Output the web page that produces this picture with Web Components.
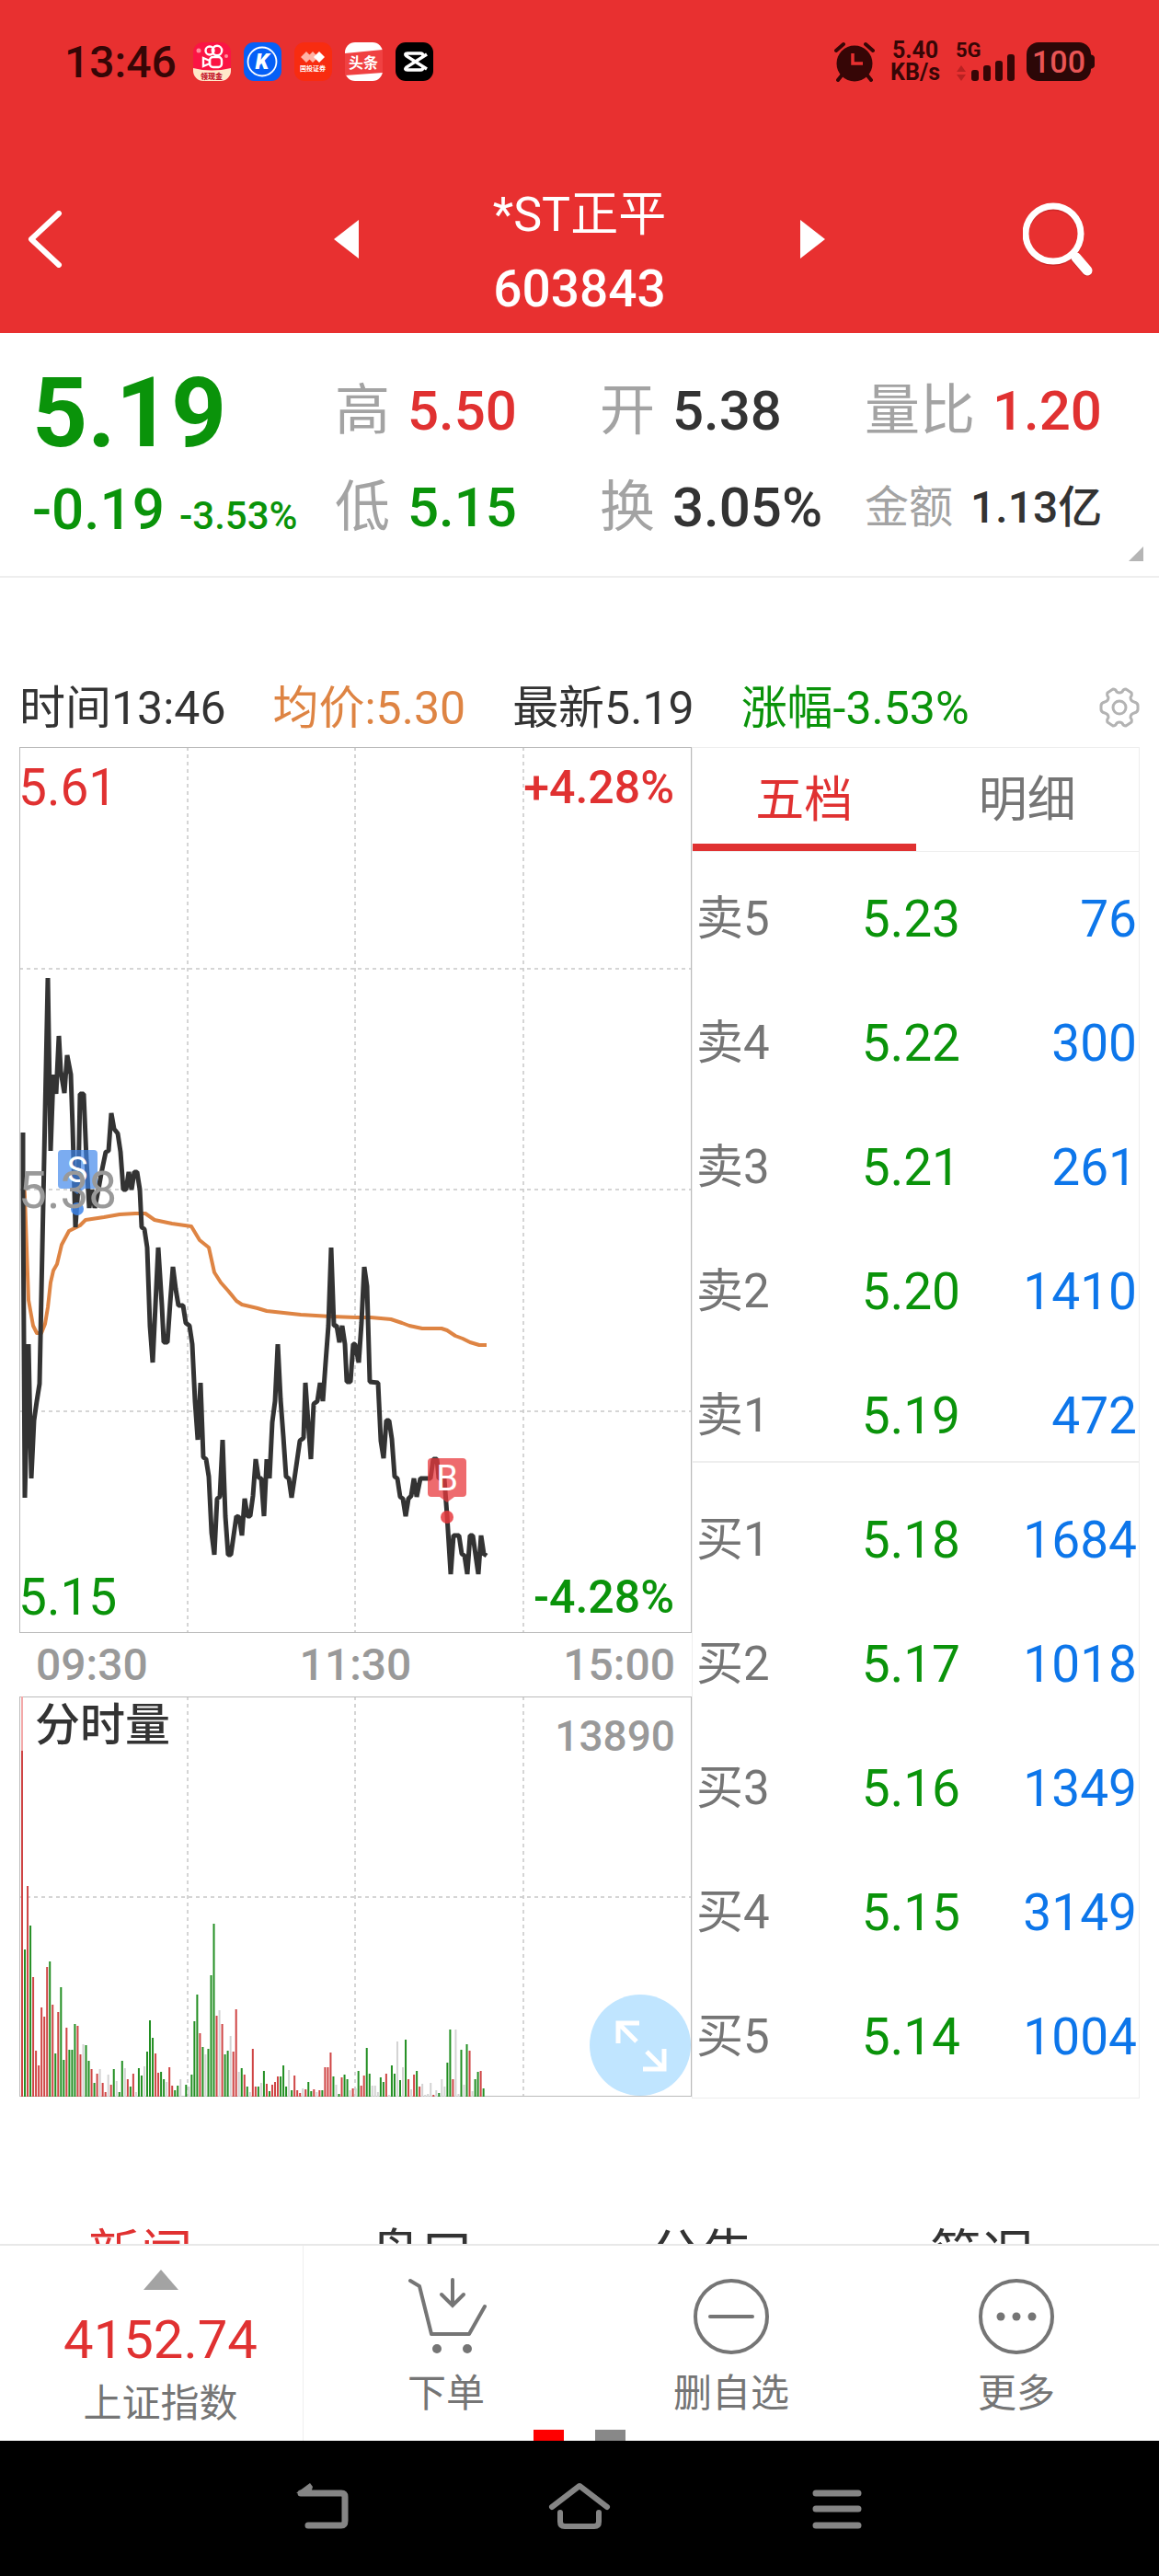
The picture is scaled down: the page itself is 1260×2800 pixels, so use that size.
<!DOCTYPE html>
<html lang="zh-CN">
<head>
<meta charset="utf-8">
<meta name="viewport" content="width=device-width, initial-scale=1">
<title>*ST正平 603843</title>
<style>
    :root {
        --red: #e03131;
        --green: #0a930a;
        --orange: #de8443;
        --blue: #0d76ea;
        --ink: #333;
        --grey: #757575;
        --muted: #a3a3a3;
        --line: #eee;
    }
    body {
        margin: 0;
        background: #fff;
        color: var(--ink);
        font-family: Roboto, "Noto Sans CJK SC", sans-serif;
    }
</style>
</head>
<body>
<status-bar></status-bar>
<stock-header code="603843">*ST正平</stock-header>
<quote-summary price="5.19" change="-0.19" percent="-3.53%">
    <quote-stat label="高" tone="up">5.50</quote-stat>
    <quote-stat label="开">5.38</quote-stat>
    <quote-stat label="量比" tone="up">1.20</quote-stat>
    <quote-stat label="低" tone="down">5.15</quote-stat>
    <quote-stat label="换">3.05%</quote-stat>
    <quote-stat label="金额" compact>1.13亿</quote-stat>
</quote-summary>
<stock-board>
    <info-strip slot="info"></info-strip>
    <price-chart slot="chart"></price-chart>
    <volume-chart slot="chart"></volume-chart>
    <order-book slot="book"></order-book>
</stock-board>
<section-tabs></section-tabs>
<dock-bar>
    <index-ticker slot="ticker" value="4152.74">上证指数</index-ticker>
    <dock-item icon="cart">下单</dock-item>
    <dock-item icon="minus">删自选</dock-item>
    <dock-item icon="more">更多</dock-item>
</dock-bar>
<system-nav></system-nav>

<script>
class BaseElement extends HTMLElement {
    constructor() {
        super();
        this.attachShadow({ mode: 'open' });
    }

    connectedCallback() {
        this.shadowRoot.innerHTML = `
            <style>
                :host { display: block; box-sizing: border-box; }
                * { box-sizing: border-box; }
                button { margin: 0; padding: 0; border: 0; background: none; font: inherit; color: inherit; cursor: pointer; }
                svg { display: block; }
            </style>
            ${this.template()}`;
    }
}

class StatusBar extends BaseElement {
    template() {
        return `
            <style>
                :host { background: #e83030; color: #360606; font-weight: 500; }
                .bar { display: flex; align-items: center; justify-content: space-between; height: 134px; padding: 0 70px; }
                .side { display: flex; align-items: center; }
                .time { font-size: 48px; margin-right: 18px; }
                .apps { display: flex; gap: 14px; }
                .right { gap: 17px; }
                .speed { display: flex; flex-direction: column; align-items: center; font-size: 25px; line-height: 24px; font-weight: 700; }
                .signal { overflow: visible; }
                .signal text { font-size: 22px; font-weight: 700; }
                .battery { margin-left: -4px; }
            </style>
            <div class="bar">
                <div class="side">
                    <span class="time">13:46</span>
                    <div class="apps">
                        <svg width="41" height="42" viewBox="0 0 41 42">
                            <defs><clipPath id="c"><rect width="41" height="42" rx="11"/></clipPath></defs>
                            <g clip-path="url(#c)">
                                <rect width="41" height="42" fill="#fb1444"/>
                                <path d="M0 28q20 5 41 0v14H0z" fill="#ffe9c9"/>
                                <g fill="none" stroke="#fff" stroke-width="2.4">
                                    <circle cx="18" cy="9" r="4.5"/><circle cx="26" cy="9" r="5.2"/>
                                    <rect x="18" y="16" width="13" height="11" rx="3.5"/>
                                    <path d="M18 20l-7-3v9l7-3z"/>
                                </g>
                                <g fill="#ff8c9c"><circle cx="6" cy="9" r="2.5"/><circle cx="36" cy="15" r="2"/></g>
                            </g>
                            <text x="20" y="40" text-anchor="middle" font-size="8" font-weight="900" fill="#c4152c">领现金</text>
                        </svg>
                        <svg width="41" height="42" viewBox="0 0 41 42">
                            <rect width="41" height="42" rx="11" fill="#0660f7"/>
                            <circle cx="20" cy="21" r="15.5" fill="none" stroke="#fff" stroke-width="1.8"/>
                            <text x="20" y="29" text-anchor="middle" font-size="24" font-weight="900" font-style="italic" fill="#fff">K</text>
                        </svg>
                        <svg width="41" height="42" viewBox="0 0 41 42">
                            <rect width="41" height="42" rx="11" fill="#f82c10"/>
                            <path d="M7 16l6-6 6 6-6 6zM14 16l6-6 6 6-6 6z" fill="#ffb3a5"/>
                            <path d="M21 16l6-6 6 6-6 6z" fill="#fff"/>
                            <text x="20" y="31" text-anchor="middle" font-size="7" font-weight="700" fill="#fff">国投证券</text>
                        </svg>
                        <svg width="41" height="42" viewBox="0 0 41 42">
                            <rect width="41" height="42" rx="11" fill="#fff"/>
                            <path d="M0 12l41-4v25l-41 3z" fill="#f04142"/>
                            <text x="20" y="28" text-anchor="middle" font-size="16" font-weight="700" fill="#fff">头条</text>
                        </svg>
                        <svg width="41" height="42" viewBox="0 0 41 42">
                            <rect width="41" height="42" rx="11" fill="#000"/>
                            <path d="M34 13L12 27q-3 3 1 3h14q3 0 3-3M34 29L12 15q-3-3 1-3h14q3 0 3 3" fill="none" stroke="#fff" stroke-width="3.5"/>
                        </svg>
                    </div>
                </div>
                <div class="side right">
                    <svg width="44" height="44" viewBox="0 0 44 44" stroke="#360606" stroke-linecap="round">
                        <circle cx="22" cy="24" r="19.5" fill="#360606" stroke="none"/>
                        <path d="M2 10l8-7M42 10l-8-7M8 37l-4 5M36 37l4 5" stroke-width="4"/>
                        <path d="M20 13v11h11" fill="none" stroke="#e83030" stroke-width="3.5" stroke-linecap="butt"/>
                    </svg>
                    <div class="speed"><span>5.40</span><span>KB/s</span></div>
                    <svg class="signal" width="64" height="44" viewBox="0 0 64 44" fill="#360606">
                        <text x="0" y="17">5G</text>
                        <path d="M1 33l5-7 5 7zM1 36l5 7 5-7z" fill="#b92222"/>
                        <rect x="17" y="31" width="8" height="12" rx="3"/>
                        <rect x="30" y="26" width="8" height="17" rx="3"/>
                        <rect x="43" y="21" width="8" height="22" rx="3"/>
                        <rect x="56" y="14" width="8" height="29" rx="3"/>
                    </svg>
                    <svg class="battery" width="74" height="42" viewBox="0 0 74 42">
                        <rect width="70" height="42" rx="13" fill="#2c0707"/>
                        <path d="M69 13q5 1 5 4v8q0 3-5 4z" fill="#2c0707"/>
                        <text x="35" y="33" text-anchor="middle" font-size="34" font-weight="500" fill="#e85555">100</text>
                    </svg>
                </div>
            </div>`;
    }
}

class StockHeader extends BaseElement {
    template() {
        return `
            <style>
                :host { background: #e83030; color: #fff; }
                header { display: grid; grid-template-columns: 1fr auto 1fr; column-gap: 146px; align-items: center; padding: 60px 0 8px; }
                .side { display: flex; align-items: center; justify-content: space-between; margin-bottom: 28px; }
                .left { padding-left: 30px; }
                .right { padding-right: 72px; }
                h1 { margin: 0; font-size: 52px; font-weight: 400; text-align: center; line-height: 80px; }
                h1 span { display: block; font-size: 55px; font-weight: 500; }
            </style>
            <header>
                <div class="side left">
                    <button aria-label="返回">
                        <svg width="38" height="62" viewBox="0 0 38 62"><path d="M34 3L4 31l30 28" fill="none" stroke="#fff" stroke-width="6" stroke-linecap="round" stroke-linejoin="round"/></svg>
                    </button>
                    <button aria-label="上一只">
                        <svg width="27" height="42" viewBox="0 0 27 42"><path d="M27 0v42L0 21z" fill="#fff"/></svg>
                    </button>
                </div>
                <h1><slot></slot><span>${this.getAttribute('code')}</span></h1>
                <div class="side right">
                    <button aria-label="下一只">
                        <svg width="27" height="42" viewBox="0 0 27 42"><path d="M0 0v42l27-21z" fill="#fff"/></svg>
                    </button>
                    <button aria-label="搜索">
                        <svg width="76" height="80" viewBox="0 0 76 80" fill="none" stroke-linecap="round">
                            <g stroke="#b32020" opacity="0.5"><circle cx="33" cy="36" r="30" stroke-width="6"/><path d="M57 61l13 15" stroke-width="10"/></g>
                            <g stroke="#fff"><circle cx="33" cy="34" r="30" stroke-width="7"/><path d="M54 57l5 6" stroke-width="7"/><path d="M58 60l12 14" stroke-width="11"/></g>
                        </svg>
                    </button>
                </div>
            </header>`;
    }
}

class QuoteStat extends BaseElement {
    template() {
        return `
            <style>
                :host { display: flex; align-items: center; gap: 19px; height: 105px; font-size: 60px; font-weight: 500; line-height: 105px; white-space: nowrap; }
                :host([tone="up"]) { color: var(--red); }
                :host([tone="down"]) { color: var(--green); }
                :host([compact]) { font-size: 48px; }
                .label { font-weight: 400; color: var(--muted); }
            </style>
            <span class="label">${this.getAttribute('label')}</span><span><slot></slot></span>`;
    }
}

class QuoteSummary extends BaseElement {
    template() {
        return `
            <style>
                :host { position: relative; display: grid; grid-template-columns: 364fr 864fr; padding: 32px 32px 22px 0; border-bottom: 2px solid var(--line); }
                .now { padding-left: 35px; color: var(--green); white-space: nowrap; }
                .price { font-size: 105px; font-weight: 700; line-height: 112px; }
                .change { display: flex; align-items: baseline; gap: 16px; font-size: 62px; font-weight: 500; line-height: 96px; }
                .percent { font-size: 42px; line-height: 60px; }
                .stats { display: grid; grid-template-columns: repeat(3, 1fr); }
                .corner { position: absolute; right: 17px; bottom: 16px; }
            </style>
            <div class="now">
                <div class="price">${this.getAttribute('price')}</div>
                <div class="change"><span>${this.getAttribute('change')}</span><span class="percent">${this.getAttribute('percent')}</span></div>
            </div>
            <div class="stats"><slot></slot></div>
            <svg class="corner" width="16" height="16" viewBox="0 0 16 16"><path d="M16 0v16H0z" fill="#b5b5b5"/></svg>`;
    }
}

class StockBoard extends BaseElement {
    template() {
        return `
            <style>
                :host { padding: 112px 21px 0; }
                .grid { display: grid; grid-template-columns: 731fr 487fr; }
            </style>
            <slot name="info"></slot>
            <div class="grid">
                <div><slot name="chart"></slot></div>
                <slot name="book"></slot>
            </div>`;
    }
}

class InfoStrip extends BaseElement {
    template() {
        return `
            <style>
                :host { display: flex; align-items: center; gap: 51px; height: 72px; padding-bottom: 14px; font-size: 50px; white-space: nowrap; }
                span { padding-bottom: 8px; }
                .avg { color: var(--orange); }
                .down { color: var(--green); }
                button { margin-left: auto; }
            </style>
            <span>时间13:46</span>
            <span class="avg">均价:5.30</span>
            <span>最新5.19</span>
            <span class="down">涨幅-3.53%</span>
            <button aria-label="设置">
                <svg width="44" height="44" viewBox="0 0 44 44" fill="none" stroke="#b3b3b3" stroke-width="3" stroke-linejoin="round">
                    <path d="M15 2q3 0 4 3 3 2 6 0 1-3 4-3l6 4q1 3-1 5 0 4 4 5 4 1 4 4v4q0 3-4 4-4 1-4 5 2 2 1 5l-6 4q-3 0-4-3-3-2-6 0-1 3-4 3l-6-4q-1-3 1-5 0-4-4-5-4-1-4-4v-4q0-3 4-4 4-1 4-5-2-2-1-5z"/>
                    <circle cx="22" cy="22" r="7"/>
                </svg>
            </button>`;
    }
}

const PRICE_LINE = [
    '25,1230 25,1292 27,1627 31,1460 34,1606 37,1543 40,1522 43,1503 52,1062 55,1250 58,1167 61,1188 64,1125 66,1163 70,1187',
    '73,1146 77,1167 79,1225 82,1333 85,1290 87,1188 91,1188 94,1260 97,1312 100,1292 103,1312 107,1292 110,1275 115,1251',
    '118,1250 121,1209 124,1226 128,1231 131,1251 134,1292 137,1292 140,1273 143,1292 146,1273 149,1273 152,1292 154,1333',
    '157,1335 160,1355 163,1440 166,1480 172,1355 176,1418 178,1458 182,1458 185,1415 188,1376 191,1400 194,1418 199,1418',
    '202,1437 206,1440 209,1460 212,1522 215,1564 218,1502 221,1583 224,1585 227,1604 230,1665 233,1689 236,1628 239,1626',
    '242,1564 245,1647 248,1689 251,1689 254,1668 257,1647 260,1648 263,1668 266,1628 269,1647 272,1647 275,1625 278,1585',
    '281,1605 284,1606 287,1647 290,1585 293,1606 296,1545 299,1522 302,1460 305,1520 308,1560 311,1604 314,1606 317,1627',
    '321,1600 326,1565 330,1562 332,1502 335,1545 338,1585 341,1525 345,1522 348,1502 351,1522 354,1480 357,1440 360,1355',
    '363,1440 366,1440 369,1458 372,1440 375,1460 377,1501 381,1501 384,1460 386,1460 390,1480 393,1437 396,1376 399,1397',
    '402,1501 411,1502 414,1565 417,1584 420,1543 423,1543 426,1563 429,1604 432,1606 435,1626 438,1628 441,1647 444,1628',
    '447,1625 450,1606 453,1626 457,1606 468,1606 471,1585 475,1585 477,1606 483,1606 486,1646 490,1710 493,1668 499,1668',
    '502,1688 505,1690 508,1710 511,1668 514,1668 520,1710 523,1668 526,1688 529,1690'
].join(' ');

const AVERAGE_LINE = [
    '26,1280 27,1300 31,1412 36,1440 40,1448 45,1448 49,1438 52,1420 55,1393 58,1380 62,1373 67,1352 75,1337 87,1331 93,1325',
    '113,1322 130,1319 147,1318 158,1318 168,1325 187,1329 208,1332 217,1347 227,1355 233,1382 240,1393 248,1402 257,1413',
    '263,1417 280,1421 290,1424 327,1428 360,1430 387,1431 403,1431 425,1433 437,1437 445,1440 459,1443 480,1443 486,1445',
    '495,1451 503,1454 511,1458 521,1461 529,1461'
].join(' ');

class PriceChart extends BaseElement {
    template() {
        return `
            <style>
                svg { width: 100%; height: auto; }
                .plot { position: relative; }
                .label { position: absolute; line-height: 60px; font-size: 55px; }
                .percent { font-size: 50px; font-weight: 500; }
                .top { top: 14px; }
                .middle { top: 0; bottom: 0; margin: auto 0; height: 60px; color: #999; }
                .bottom { bottom: 9px; }
                .left { left: -1px; }
                .right { right: 19px; }
                .up { color: var(--red); }
                .down { color: var(--green); }
                .axis { display: flex; justify-content: space-between; padding: 0 18px; font-size: 48px; font-weight: 500; line-height: 69px; color: #999; }
            </style>
            <div class="plot">
                <svg viewBox="21 811 731 963" fill="none">
                    <g stroke="#c8c8c8" stroke-width="1.5" stroke-dasharray="4 4">
                        <path d="M204 811v963M386 811v963M569 811v963M21 1052h731M21 1292h731M21 1533h731"/>
                    </g>
                    <rect x="21.5" y="811.5" width="730" height="962" stroke="#bbb"/>
                    <polyline points="${AVERAGE_LINE}" stroke="#de8443" stroke-width="4" stroke-linejoin="round"/>
                    <polyline points="${PRICE_LINE}" stroke="#333" stroke-width="5" stroke-linejoin="bevel"/>
                    <g fill="#3d85ea">
                        <path d="M67 1249h35q4 0 4 4v34q0 4-4 4H92l-8 6-8-6h-9q-4 0-4-4v-34q0-4 4-4z" opacity="0.68"/>
                        <circle cx="84" cy="1313" r="7" opacity="0.85"/>
                        <text x="84" y="1284" text-anchor="middle" font-size="38" fill="#fff">S</text>
                    </g>
                    <g fill="#e83a3e">
                        <path d="M469 1584h34q4 0 4 4v34q0 4-4 4h-9l-8 6-8-6h-9q-4 0-4-4v-34q0-4 4-4z" opacity="0.75"/>
                        <circle cx="486" cy="1648" r="7" opacity="0.85"/>
                        <text x="486" y="1619" text-anchor="middle" font-size="38" fill="#fff">B</text>
                    </g>
                </svg>
                <span class="label top left up">5.61</span>
                <span class="label percent top right up">+4.28%</span>
                <span class="label middle left">5.38</span>
                <span class="label bottom left down">5.15</span>
                <span class="label percent bottom right down">-4.28%</span>
            </div>
            <div class="axis"><span>09:30</span><span>11:30</span><span>15:00</span></div>`;
    }
}

// one entry per minute: r = up, g = down, w = flat, followed by the bar height
const VOLUMES = `r376 g160 r229 g186 r130 r50 r34 r97 r87 r141 g147 r100 g47 r92 g119 g40 r75 g51 g51 g79
r77 r46 w57 g56 g39 r30 g15 r25 w30 r15 r5 w24 r13 g30 w17 g5 g39 w31 r19 g11
r25 w5 g31 g23 w33 g49 g83 g64 r47 r26 g27 g19 w16 r32 r12 g7 g12 w19 w0 g13
w11 g24 g82 g111 r69 g54 w46 g52 g132 g188 r88 w94 r79 g46 g50 w66 r49 r95 w27 g31
r24 g11 w5 r52 r11 g11 w15 g28 r14 g6 r13 r16 r22 g22 g34 g11 w29 g7 r23 r7
r4 w9 r8 g16 g6 r8 w5 r7 g7 r32 r32 r48 g22 w13 g3 r21 g24 g19 w7 r9
w9 g28 r12 r23 g53 g25 w12 w12 w5 g21 g16 r25 w2 g34 g25 w60 g18 w32 g62 r19
w8 r24 g28 r11 w14 w2 w3 w15 r2 w7 g4 w19 w11 g37 g73 r19 w73 w3 g51 w13
g57 r50 w6 g19 g27 r28 g9`.split(/\s+/);

const BAR_COLORS = { r: '#cf4545', g: '#238f23', w: '#d3d3d3' };
const BAR_STEP = 3.022;

class VolumeChart extends BaseElement {
    template() {
        const bars = VOLUMES.map((bar, i) => {
            const height = Number(bar.slice(1));
            const x = (2 + i * BAR_STEP).toFixed(2);
            return `<rect x="${x}" y="${435 - height}" width="2" height="${height}" fill="${BAR_COLORS[bar[0]]}"/>`;
        }).join('');
        return `
            <style>
                :host { position: relative; }
                svg { width: 100%; height: auto; }
                .name, .max { position: absolute; line-height: 60px; font-weight: 500; }
                .name { top: 2px; left: 17px; font-size: 49px; }
                .max { top: 13px; right: 18px; font-size: 46px; color: #999; }
                button { position: absolute; right: 1px; bottom: 1px; width: 110px; height: 110px; border-radius: 50%; background: #c0e5ff; }
            </style>
            <svg viewBox="0 0 731 435" fill="none">
                <path d="M183 0v435M365 0v435M548 0v435M0 218h731" stroke="#c8c8c8" stroke-width="1.5" stroke-dasharray="4 4"/>
                <rect x="0.5" y="0.5" width="730" height="434" stroke="#bbb"/>
                <rect x="2" y="0" width="2" height="435" fill="#f3a9a9"/>
                ${bars}
            </svg>
            <span class="name">分时量</span>
            <span class="max">13890</span>
            <button aria-label="全屏">
                <svg viewBox="0 0 110 110" fill="none" stroke="#fff" stroke-width="5">
                    <path d="M31 53V31h23M31 31l20 20M81 59v22H58M81 81L62 62"/>
                </svg>
            </button>`;
    }
}

const ORDERS = [
    ['卖5', '5.23', 76], ['卖4', '5.22', 300], ['卖3', '5.21', 261], ['卖2', '5.20', 1410], ['卖1', '5.19', 472],
    ['买1', '5.18', 1684], ['买2', '5.17', 1018], ['买3', '5.16', 1349], ['买4', '5.15', 3149], ['买5', '5.14', 1004]
];

class OrderBook extends BaseElement {
    template() {
        const rows = ORDERS.map(([name, price, volume]) => `
            <tr class="${name === '卖1' ? 'split' : ''}">
                <th scope="row">${name}</th><td class="price">${price}</td><td class="volume">${volume}</td>
            </tr>`).join('');
        return `
            <style>
                :host { border: 1px solid var(--line); }
                .tabs { display: grid; grid-template-columns: 1fr 1fr; border-bottom: 1px solid var(--line); margin-bottom: 4px; }
                .tabs button { height: 112px; font-size: 53px; color: var(--grey); border-bottom: 8px solid transparent; }
                .tabs button.active { color: var(--red); border-color: var(--red); }
                table { width: 100%; border-collapse: collapse; table-layout: fixed; }
                th, td { padding: 2px 0 0; height: 135px; line-height: 70px; font-size: 55px; font-weight: 400; text-align: right; }
                th { width: 24%; padding-left: 4px; font-size: 51px; text-align: left; color: var(--grey); }
                .price { width: 36%; color: var(--green); }
                .volume { padding-right: 2px; color: var(--blue); }
                .split > * { background: linear-gradient(var(--line), var(--line)) 0 118px / 100% 2px no-repeat; }
            </style>
            <div class="tabs" role="tablist">
                <button class="active" role="tab" aria-selected="true">五档</button>
                <button role="tab" aria-selected="false">明细</button>
            </div>
            <table><tbody>${rows}</tbody></table>`;
    }
}

class SectionTabs extends BaseElement {
    template() {
        return `
            <style>
                :host { margin-top: 118px; }
                nav { display: grid; grid-template-columns: repeat(4, 1fr); height: 40px; overflow: hidden; padding-right: 40px; }
                button { height: 104px; line-height: 104px; font-size: 57px; }
                .active { color: var(--red); }
            </style>
            <nav>
                <button class="active">新闻</button>
                <button>盘口</button>
                <button>公告</button>
                <button>简况</button>
            </nav>`;
    }
}

class IndexTicker extends BaseElement {
    template() {
        return `
            <style>
                :host { display: flex; flex-direction: column; align-items: center; padding: 26px 0 0 20px; border-right: 1px solid var(--line); }
                .value { margin-top: 18px; font-size: 58px; line-height: 72px; color: var(--red); }
                .name { margin-top: 4px; font-size: 42px; line-height: 60px; color: var(--grey); }
            </style>
            <svg width="38" height="22" viewBox="0 0 38 22"><path d="M19 0l19 22H0z" fill="#a3a3a3"/></svg>
            <span class="value">${this.getAttribute('value')}</span>
            <span class="name"><slot></slot></span>`;
    }
}

const DOCK_ICONS = {
    cart: `
        <path d="M5 3l10 6 13 52h41L86 31" stroke-linejoin="round"/>
        <path d="M51 2v27M39 18l12 12 12-12"/>
        <g fill="#757575" stroke="none"><circle cx="34" cy="77" r="5"/><circle cx="67" cy="77" r="5"/></g>`,
    minus: '<circle cx="44" cy="42" r="39"/><path d="M21 42h46"/>',
    more: `
        <circle cx="44" cy="42" r="39"/>
        <g fill="#757575" stroke="none"><circle cx="27" cy="42" r="4.5"/><circle cx="44" cy="42" r="4.5"/><circle cx="61" cy="42" r="4.5"/></g>`
};

class DockItem extends BaseElement {
    template() {
        return `
            <style>
                button { display: flex; flex-direction: column; align-items: center; width: 100%; padding-top: 35px; font-size: 42px; line-height: 60px; color: var(--grey); }
                svg { margin-bottom: 12px; }
            </style>
            <button>
                <svg width="88" height="84" viewBox="0 0 88 84" fill="none" stroke="#757575" stroke-width="4" stroke-linecap="round">${DOCK_ICONS[this.getAttribute('icon')]}</svg>
                <slot></slot>
            </button>`;
    }
}

class DockBar extends BaseElement {
    template() {
        return `
            <style>
                :host { position: relative; border-top: 2px solid #e8e8e8; background: #fff; }
                .items { display: grid; grid-template-columns: 330fr 310fr 310fr 310fr; height: 212px; }
                .pager { position: absolute; left: 0; right: 0; bottom: 0; display: flex; justify-content: center; gap: 34px; }
                .pager i { width: 33px; height: 12px; background: #888; }
                .pager .on { background: #f00; }
            </style>
            <div class="items"><slot name="ticker"></slot><slot></slot></div>
            <div class="pager"><i class="on"></i><i></i></div>`;
    }
}

class SystemNav extends BaseElement {
    template() {
        return `
            <style>
                :host { background: #000; }
                nav { display: flex; justify-content: center; align-items: center; gap: 212px; height: 148px; padding-bottom: 6px; }
            </style>
            <nav>
                <button aria-label="返回键">
                    <svg width="68" height="52" viewBox="0 0 68 52" fill="none" stroke="#858585" stroke-width="7" stroke-linecap="round">
                        <path d="M11 12h44q4 0 4 4v26q0 5-4 5H19"/><path d="M6 12L21 1l3 4-2 7z" fill="#858585" stroke="none"/>
                    </svg>
                </button>
                <button aria-label="主页">
                    <svg width="68" height="52" viewBox="0 0 68 52" fill="none" stroke="#858585" stroke-width="6" stroke-linecap="round" stroke-linejoin="round">
                        <path d="M4 27L34 4l30 23M13 33v10q0 5 5 5h32q5 0 5-5V33"/>
                    </svg>
                </button>
                <button aria-label="最近任务">
                    <svg width="68" height="52" viewBox="0 0 68 52" stroke="#858585" stroke-width="7" stroke-linecap="round">
                        <path d="M11 12h46M11 29h46M11 47h46"/>
                    </svg>
                </button>
            </nav>`;
    }
}

customElements.define('status-bar', StatusBar);
customElements.define('stock-header', StockHeader);
customElements.define('quote-stat', QuoteStat);
customElements.define('quote-summary', QuoteSummary);
customElements.define('stock-board', StockBoard);
customElements.define('info-strip', InfoStrip);
customElements.define('price-chart', PriceChart);
customElements.define('volume-chart', VolumeChart);
customElements.define('order-book', OrderBook);
customElements.define('section-tabs', SectionTabs);
customElements.define('index-ticker', IndexTicker);
customElements.define('dock-item', DockItem);
customElements.define('dock-bar', DockBar);
customElements.define('system-nav', SystemNav);
</script>
</body>
</html>
